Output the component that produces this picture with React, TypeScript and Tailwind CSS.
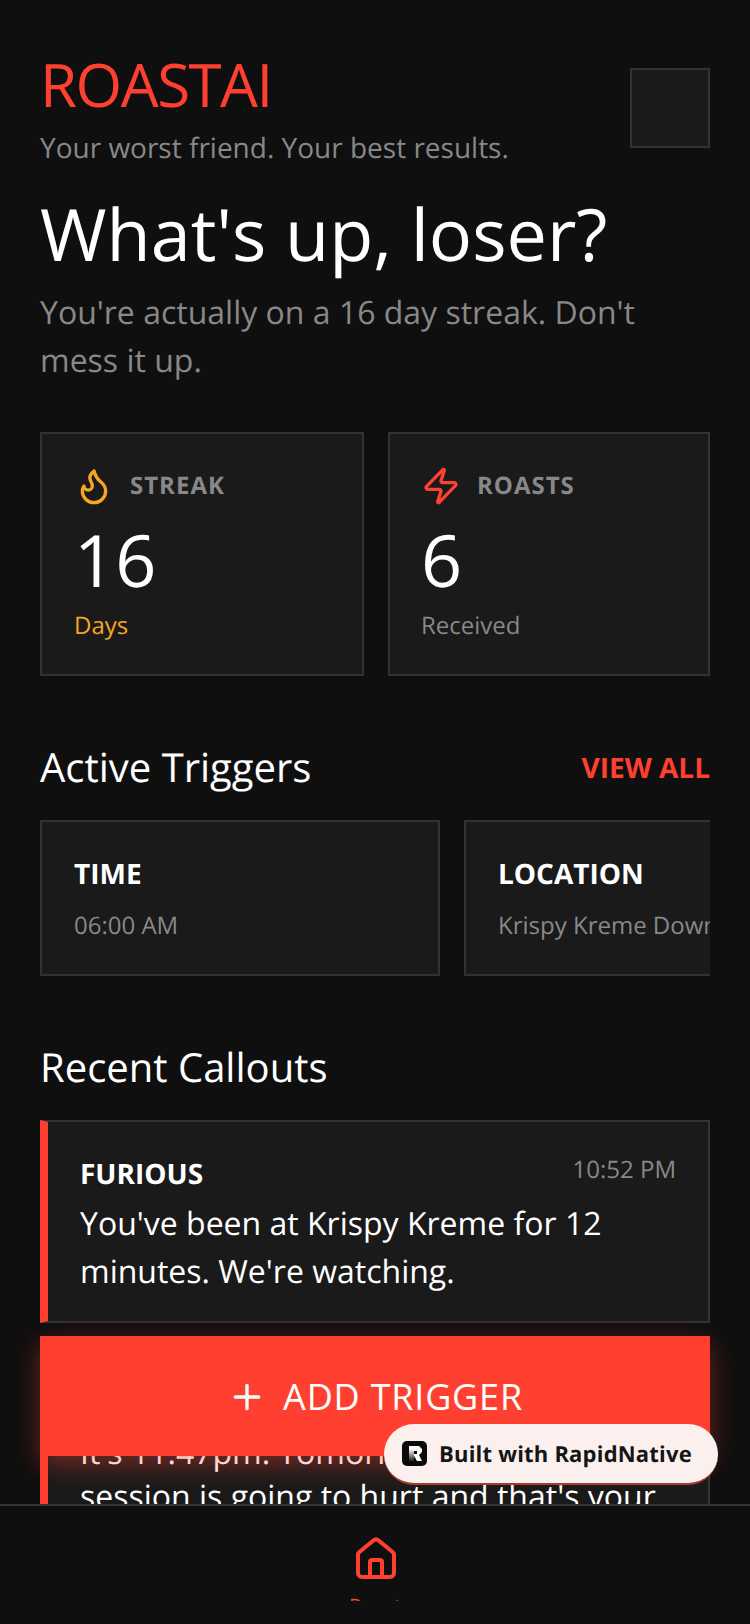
import { Flame, Zap, Plus } from "lucide-react";

const triggers = [
  { type: "TIME", value: "06:00 AM" },
  { type: "LOCATION", value: "Krispy Kreme Downtown" },
];

function StatCard({ icon, label, value, note, noteColor, box }: { icon: React.ReactNode; label: string; value: string; note: string; noteColor: string; box: string }) {
  return (
    <div className={`${box} h-[244px] bg-[#1a1a1a] border-2 border-[#333333] pt-[32px]`}>
      <div className="flex items-center gap-[16px] h-[40px]">
        {icon}
        <span className="text-[24px] font-bold tracking-[1px] text-[#888888] mt-[-1px]">{label}</span>
      </div>
      <div className="text-[72px] leading-[84px] text-white mt-[12px]">{value}</div>
      <div className={`text-[24px] leading-[32px] mt-[8px] ${noteColor}`}>{note}</div>
    </div>
  );
}

function Callout({ mood, time, text, box, leading }: { mood: string; time: string; text: string; box: string; leading: string }) {
  return (
    <div className={`${box} bg-[#1a1a1a] border-2 border-[#333333] border-l-[8px] border-l-[#ff4030] px-[32px] pt-[32px] pb-[25px]`}>
      <div className="flex justify-between">
        <span className="text-[28px] leading-[40px] font-bold text-white">{mood}</span>
        <span className="text-[24px] leading-[32px] text-[#888888]">{time}</span>
      </div>
      <p className={`text-[32px] text-white mt-[6px] ${leading}`}>{text}</p>
    </div>
  );
}

export default function App() {
  return (
    <div className="relative w-[750px] h-[1624px] overflow-hidden flex flex-col bg-[#0f0f0f] font-['Open_Sans',sans-serif] [text-rendering:geometricPrecision]">
      <main className="flex-1 overflow-hidden px-[40px] pt-[48px]">
        {/* header */}
        <div className="flex justify-between items-start">
          <div>
            <div className="text-[60px] leading-[72px] text-[#ff4030] tracking-[-1.5px]">ROASTAI</div>
            <div className="text-[28px] leading-[36px] text-[#888888] mt-[10px]">Your worst friend. Your best results.</div>
          </div>
          <div className="w-[80px] h-[80px] mt-[20px] bg-[#1a1a1a] border-2 border-[#333333]" />
        </div>

        <h1 className="text-[72px] leading-[84px] text-white mt-[26px]">What's up, loser?</h1>
        <p className="text-[32px] leading-[48px] text-[#888888] mt-[13px]">You're actually on a 16 day streak. Don't mess it up.</p>

        {/* stats */}
        <div className="flex gap-[24px] mt-[47px]">
          <StatCard box="w-[324px] px-[32px]" icon={<Flame size={40} strokeWidth={2} className="text-[#f5a623]" />} label="STREAK" value="16" note="Days" noteColor="text-[#f5a623]" />
          <StatCard box="flex-1 px-[31px]" icon={<Zap size={40} strokeWidth={2} className="text-[#ff4030]" />} label="ROASTS" value="6" note="Received" noteColor="text-[#888888]" />
        </div>

        {/* triggers */}
        <div className="flex justify-between items-center mt-[63px]">
          <h2 className="text-[40px] leading-[56px] text-white">Active Triggers</h2>
          <span className="text-[28px] font-bold text-[#ff4030] mt-[2px]">VIEW ALL</span>
        </div>
        <div className="flex gap-[24px] mt-[25px] overflow-hidden">
          {triggers.map((t) => (
            <div key={t.type} className="w-[400px] shrink-0 h-[156px] bg-[#1a1a1a] border-2 border-[#333333] px-[32px] pt-[32px]">
              <div className="text-[28px] leading-[40px] font-bold text-white">{t.type}</div>
              <div className="text-[24px] leading-[32px] text-[#888888] mt-[16px] whitespace-nowrap">{t.value}</div>
            </div>
          ))}
        </div>

        {/* callouts */}
        <h2 className="text-[40px] leading-[56px] text-white mt-[63px]">Recent Callouts</h2>
        <div className="mt-[25px]">
          <Callout box="mb-[28px]" leading="leading-[48px]" mood="FURIOUS" time="10:52 PM" text="You've been at Krispy Kreme for 12 minutes. We're watching." />
          <Callout box="mb-[22px]" leading="leading-[44px]" mood="SAVAGE" time="11:47 PM" text="It's 11:47pm. Tomorrow morning's session is going to hurt and that's your fault." />
        </div>
      </main>

      {/* tab bar */}
      <nav className="relative z-10 h-[120px] shrink-0 bg-[#0f0f0f] border-t-2 border-[#333333] flex flex-col items-center">
        <svg width="48" height="48" viewBox="0 0 48 48" fill="none" stroke="#ff4030" strokeWidth="4" strokeLinejoin="round" strokeLinecap="round" className="mt-[29px] ml-[2px]">
          <path d="M6 20a4 4 0 0 1 1.400-3L21.400 5.500a4 4 0 0 1 5.200 0L40.600 17a4 4 0 0 1 1.400 3V38a4 4 0 0 1-4 4H10a4 4 0 0 1-4-4Z" />
          <path d="M18 42V27a2 2 0 0 1 2-2h8a2 2 0 0 1 2 2V42" />
        </svg>
        <div className="h-[9px] mt-[9px] overflow-hidden">
          <div className="text-[20px] leading-[28px] text-[#ff4030]">Roast</div>
        </div>
      </nav>

      {/* add trigger button */}
      <button className="absolute z-20 left-[40px] top-[1336px] w-[670px] h-[120px] pt-[2px] bg-[#ff4030] text-white flex items-center justify-center gap-[16px] text-[36px] tracking-[0.8px] shadow-[0_8px_24px_rgba(255,64,48,0.4)]">
        <Plus size={40} strokeWidth={2} />
        ADD TRIGGER
      </button>

      {/* badge */}
      <div className="absolute z-30 left-[384px] top-[1424px] w-[334px] h-[61px] rounded-[30px] bg-[#fbf0ee] border-b-2 border-[#a83a30] flex items-center pl-[18px] gap-[12px]">
        <svg width="25" height="25" viewBox="0 0 25 25">
          <defs>
            <linearGradient id="stem" x1="0" y1="0" x2="0" y2="1">
              <stop offset="0" stopColor="#ffffff" />
              <stop offset="1" stopColor="#222222" />
            </linearGradient>
          </defs>
          <rect width="25" height="25" rx="5" fill="#0a0a0a" />
          <path d="M7 5h10l3 3v3l-3 3 3 6h-5l-4-7h4v-3H7z" fill="#ffffff" />
          <path d="M7 8h5v12H7z" fill="url(#stem)" />
        </svg>
        <span className="text-[22px] font-bold tracking-[0.2px] text-[#151515] mt-[1px]">Built with RapidNative</span>
      </div>
    </div>
  );
}
